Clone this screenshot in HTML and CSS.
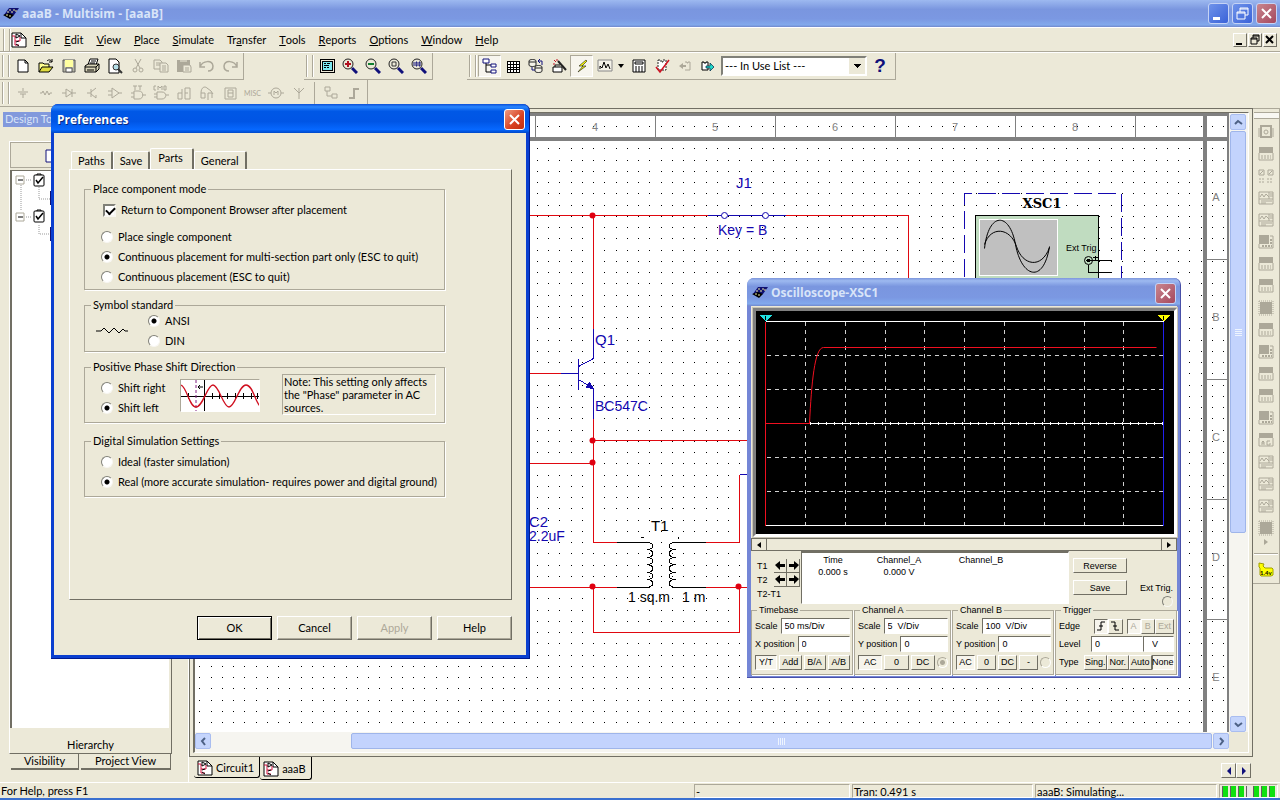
FILE: index.html
```
<!DOCTYPE html>
<html lang="en">
<head>
  <meta charset="UTF-8" />
  <meta name="viewport" content="width=device-width, initial-scale=1.0" />
  <title>aaaB - Multisim - [aaaB]</title>
  <link rel="stylesheet" href="styles.css">
</head>
<body>
  <!-- shared icons -->
  <svg class="sprite" aria-hidden="true">
    <symbol id="i-app" viewBox="0 0 16 16">
      <path d="M6 2h10l-5 7H1z" fill="#101070"/>
      <path d="M0 9l6-2 5 2-4 4z" fill="#000"/>
      <path d="M6 4h2M10 4h2M4 6h2M8 6h2M12 5h2M3 9h2M6 10h2" stroke="#e8e8a0"/>
    </symbol>
    <symbol id="i-doc" viewBox="0 0 16 16">
      <path d="M1 1h9l5 5v9H1z" fill="#fff" stroke="#000"/>
      <path d="M10 1v5h5" fill="none" stroke="#000"/>
      <path d="M1 4h3v9h4M4 9h5V5" fill="none" stroke="#d0103a"/>
      <path d="M5 2l4 2-4 2zM5 10l3-1M5 12l3 2" fill="#fff" stroke="#000"/>
    </symbol>
    <symbol id="i-lens" viewBox="0 0 16 16">
      <path d="M10 10l5 5" stroke="#10107a" stroke-width="3"/>
      <circle cx="6" cy="6" r="5" fill="#ece9d8" stroke="#222"/>
    </symbol>
    <symbol id="i-check" viewBox="0 0 12 14">
      <rect x="1" y="2" width="10" height="11" rx="1" fill="#fff" stroke="#000"/>
      <path d="M4 2V1h4v1" fill="none" stroke="#000"/>
      <path d="M3 7l2 3 5-6" fill="none" stroke="#000" stroke-width="1.5"/>
    </symbol>
    <symbol id="m-a" viewBox="0 0 16 16">
      <path d="M3 2h10v11H3z" fill="none" stroke="#aca899" stroke-width="2"/>
      <path d="M1 4v9M15 4v9" stroke="#aca899"/><circle cx="8" cy="8" r="2" fill="none" stroke="#aca899"/>
    </symbol>
    <symbol id="m-b" viewBox="0 0 16 16">
      <path d="M1 1h14v6H1z" fill="#aca899"/>
      <path d="M1 7v7h14V7" fill="none" stroke="#aca899"/>
      <path d="M3 10h10M3 12h10" stroke="#aca899" stroke-dasharray="2 1"/>
    </symbol>
    <symbol id="m-c" viewBox="0 0 16 16">
      <path d="M1 2h5v5H1zM10 2h5v5h-5zM2 6l3-3M11 6l3-3" fill="none" stroke="#aca899"/>
      <path d="M1 11h6M9 11h6M1 14h6M9 14h6" stroke="#aca899" stroke-dasharray="2 1"/>
    </symbol>
    <symbol id="m-d" viewBox="0 0 16 16">
      <path d="M1 2h14v12H1zM1 9h14M11 2v7" fill="none" stroke="#aca899"/>
      <path d="M2 7l2-3 2 3 2-3 3 3M12 4h3M12 6h3M3 11h11M3 13h5" fill="none" stroke="#aca899"/>
    </symbol>
    <symbol id="m-e" viewBox="0 0 16 16">
      <path d="M1 1h10v9H1z" fill="#aca899"/>
      <path d="M1 10v4h14V2h-3" fill="none" stroke="#aca899"/>
      <path d="M4 12h10M13 5v5" stroke="#aca899" stroke-width="2" stroke-dasharray="2 1"/>
    </symbol>
    <symbol id="m-f" viewBox="0 0 16 16">
      <path d="M2 2h12v12H2z" fill="#aca899"/>
      <path d="M1 1v14M15 1v14M1 15h14M1 1h14" stroke="#aca899" stroke-dasharray="1 1"/>
    </symbol>
    <symbol id="m-g" viewBox="0 0 16 16">
      <path d="M1 1h14v5H1z" fill="#aca899"/>
      <path d="M1 6v8h14V6M4 13v-3l1-1 1 1v3M4 11h2M12 9H9v4h3v-2" fill="none" stroke="#aca899"/>
    </symbol>
  </svg>

  <header class="titlebar">
    <svg class="icon"><use href="#i-app"/></svg>
    <h1>aaaB - Multisim - [aaaB]</h1>
    <button class="cap" aria-label="Minimize"><svg viewBox="0 0 19 19"><path d="M4 13h7v3H4z" fill="#fff"/></svg></button>
    <button class="cap" aria-label="Restore"><svg viewBox="0 0 19 19"><path d="M7 8V4h8v7h-3M4 8h8v7H4zM4 9h8M7 5h8" fill="none" stroke="#fff"/></svg></button>
    <button class="cap close" aria-label="Close"><svg viewBox="0 0 19 19"><path d="M5 5l9 9M14 5l-9 9" stroke="#fff" stroke-width="2"/></svg></button>
  </header>

  <nav class="menubar">
    <span class="grip"></span>
    <svg class="icon"><use href="#i-doc"/></svg>
    <button><u>F</u>ile</button>
    <button><u>E</u>dit</button>
    <button><u>V</u>iew</button>
    <button><u>P</u>lace</button>
    <button><u>S</u>imulate</button>
    <button>Tr<u>a</u>nsfer</button>
    <button><u>T</u>ools</button>
    <button><u>R</u>eports</button>
    <button><u>O</u>ptions</button>
    <button><u>W</u>indow</button>
    <button><u>H</u>elp</button>
    <div class="mdi">
      <button aria-label="Minimize document"><svg viewBox="0 0 12 12"><path d="M2 9h6v2H2z"/></svg></button>
      <button aria-label="Restore document"><svg viewBox="0 0 12 12"><path d="M4 4V1h6v6H8M2 4h6v6H2zM2 5h6M4 2h6" fill="none" stroke="#000"/></svg></button>
      <button aria-label="Close document"><svg viewBox="0 0 12 12"><path d="M2 2l7 7M9 2l-7 7" stroke="#000" stroke-width="2"/></svg></button>
    </div>
  </nav>

  <div class="toolrow">
    <div class="toolbar">
      <span class="grip"></span>
      <button aria-label="New"><svg viewBox="0 0 16 16"><path d="M3 2h7l3 3v9H3z" fill="#fff" stroke="#000"/><path d="M10 2v3h3" fill="none" stroke="#000"/></svg></button>
      <button aria-label="Open"><svg viewBox="0 0 16 16"><path d="M1 14V5h4l1 1h5v3" fill="#ffff90" stroke="#000"/><path d="M1 14l3-5h11l-4 5z" fill="#e0dc40" stroke="#000"/><path d="M9 3c2-2 4-1 5 1M14 1v3h-3" fill="none" stroke="#000"/></svg></button>
      <button aria-label="Save"><svg viewBox="0 0 16 16"><path d="M2 2h12v12H2z" fill="#b5b5a5" stroke="#555"/><path d="M4 2h8v7H4z" fill="#ffffa0"/><path d="M5 10h6v4H5z" fill="#fff" stroke="#555"/></svg></button>
      <button aria-label="Print"><svg viewBox="0 0 16 16"><path d="M4 7l2-6h8l-2 6" fill="#fff" stroke="#000"/><path d="M1 8l3-2h11v5l-3 3H1z" fill="#d8d4b8" stroke="#000"/><path d="M1 9h11v5M12 9l3-3M3 12h7M7 3h5M6 5h5" fill="none" stroke="#000"/></svg></button>
      <button aria-label="Print preview"><svg viewBox="0 0 16 16"><path d="M2 1h7l3 3v11H2z" fill="#fff" stroke="#000"/><circle cx="9" cy="9" r="3" fill="#b5dfe8" stroke="#333"/><path d="M11 11l4 4" stroke="#333" stroke-width="2"/></svg></button>
      <button aria-label="Cut" disabled><svg viewBox="0 0 16 16"><path d="M5 1l5 9M11 1L6 10" fill="none" stroke="#aca899"/><circle cx="5" cy="12" r="2" fill="none" stroke="#aca899"/><circle cx="11" cy="12" r="2" fill="none" stroke="#aca899"/></svg></button>
      <button aria-label="Copy" disabled><svg viewBox="0 0 16 16"><path d="M1 2h6l2 2v7H1zM3 5h4M3 7h4" fill="none" stroke="#aca899"/><path d="M7 5h6l2 2v7H7z" fill="#ece9d8" stroke="#aca899"/><path d="M9 8h4M9 10h4M9 12h4" stroke="#aca899"/></svg></button>
      <button aria-label="Paste" disabled><svg viewBox="0 0 16 16"><path d="M1 2h13v12H1z" fill="#aca899"/><path d="M4 3h7" stroke="#ece9d8"/><path d="M7 7h7l1 2v5H7z" fill="#ece9d8" stroke="#aca899"/><path d="M9 10h4M9 12h4" stroke="#aca899"/></svg></button>
      <button aria-label="Undo" disabled><svg viewBox="0 0 16 16"><path d="M1 4v5h5M1 9c3-7 12-7 13-1 0 3-2 5-5 5" fill="none" stroke="#aca899" stroke-width="1.5"/></svg></button>
      <button aria-label="Redo" disabled><svg viewBox="0 0 16 16"><path d="M15 4v5h-5M15 9c-3-7-12-7-13-1 0 3 2 5 5 5" fill="none" stroke="#aca899" stroke-width="1.5"/></svg></button>
    </div>
    <div class="toolbar view-tools">
      <span class="grip"></span>
      <button aria-label="Full screen"><svg viewBox="0 0 16 16" shape-rendering="crispEdges"><path d="M1 1h14v13H1z" fill="#ece9d8" stroke="#000"/><path d="M3 3h10v9H3z" fill="#7be8f0" stroke="#000"/><path d="M5 5h2M8 5h3M5 7h5M5 9h2M8 9h2" stroke="#000"/></svg></button>
      <button aria-label="Zoom in"><svg viewBox="0 0 16 16"><use href="#i-lens"/><path d="M3 6h6M6 3v6" stroke="#b01020" stroke-width="2"/></svg></button>
      <button aria-label="Zoom out"><svg viewBox="0 0 16 16"><use href="#i-lens"/><path d="M3 6h6" stroke="#108030" stroke-width="2"/></svg></button>
      <button aria-label="Zoom area"><svg viewBox="0 0 16 16"><use href="#i-lens"/><path d="M4 4h4v4H4z" fill="none" stroke="#333"/></svg></button>
      <button aria-label="Zoom fit"><svg viewBox="0 0 16 16"><use href="#i-lens"/><path d="M3 4v4M5 4h1v4H5zM8 4h1v4H8z" fill="none" stroke="#10107a"/></svg></button>
    </div>
    <div class="toolbar main-tools">
      <span class="grip"></span>
      <button class="on" aria-label="Design toolbox"><svg viewBox="0 0 16 16"><path d="M4 5v9h5M4 7h5" fill="none" stroke="#000"/><path d="M1 1h6v4H1zM9 6h5v3H9zM9 12h5v3H9z" fill="#fff" stroke="#10107a"/></svg></button>
      <button aria-label="Spreadsheet view"><svg viewBox="0 0 16 16" shape-rendering="crispEdges"><path d="M2 3h12v11H2z" fill="#fff" stroke="#000"/><path d="M2 6h12M2 9h12M2 11h12M5 3v11M8 3v11M11 3v11" stroke="#000"/></svg></button>
      <button aria-label="Database manager"><svg viewBox="0 0 16 16"><path d="M1 3c0-2 7-2 7 0v4c0 2-7 2-7 0zM7 9c0-2 7-2 7 0v4c0 2-7 2-7 0zM1 4h7M7 10h7" fill="#f4f2e8" stroke="#222"/><path d="M4 9v3h3M10 3h4v4M12 1l-2 2 2 2" fill="none" stroke="#10107a"/></svg></button>
      <button aria-label="Create component"><svg viewBox="0 0 16 16"><path d="M2 9h9v5H2zM4 9V7h5" fill="#fff" stroke="#000"/><path d="M7 3l8 9" stroke="#222" stroke-width="2"/><path d="M3 2l2 2M2 6h2M6 1v2" stroke="#c01020"/></svg></button>
      <button class="on" aria-label="Run simulation"><svg viewBox="0 0 16 16"><path d="M12 2L5 8h4l-5 6 8-6H8l5-5z" fill="#ff0" stroke="#332" stroke-width=".7"/></svg></button>
      <button class="wide" aria-label="Grapher"><svg viewBox="0 0 16 16"><path d="M1 2h14v11H1z" fill="#f4f2e8" stroke="#888"/><path d="M3 11V8l2 2 2-6 2 6 2-4 2 5" fill="none" stroke="#000"/></svg><svg class="drop" viewBox="0 0 6 4"><path d="M0 0h6L3 4z"/></svg></button>
      <button aria-label="Postprocessor"><svg viewBox="0 0 16 16"><path d="M2 2h12v12H2z" fill="#fff" stroke="#000"/><path d="M4 4h8v2H4z" fill="none" stroke="#000"/><path d="M4 9h9M4 11h9M4 13h9" stroke="#000" stroke-dasharray="2 1"/></svg></button>
      <button aria-label="Electrical rules checking"><svg viewBox="0 0 16 16"><path d="M4 2h3v2h2V2h3v10H4z" fill="#fff" stroke="#222" stroke-dasharray="2 1"/><path d="M2 9l4 5 9-12" fill="none" stroke="#d01020" stroke-width="1.5"/></svg></button>
      <button aria-label="Back annotate" disabled><svg viewBox="0 0 16 16"><path d="M2 8l4-3v2h3v2H6v2z" fill="#aca899"/><path d="M8 4h2v1h1V4h2v8H8" fill="none" stroke="#aca899"/></svg></button>
      <button aria-label="Forward annotate"><svg viewBox="0 0 16 16"><path d="M2 4h2v1h2V4h2v8H2z" fill="#fff" stroke="#000"/><path d="M6 8h4V5l4 4-4 4v-3H6z" fill="#20d8c8" stroke="#024" stroke-width=".7"/></svg></button>
      <select class="inuse" aria-label="In use list"><option>--- In Use List ---</option></select>
      <button class="help" aria-label="Help topics">?</button>
    </div>
  </div>

  <div class="toolrow second">
    <div class="toolbar">
      <span class="grip"></span>
      <button disabled aria-label="Source"><svg viewBox="0 0 16 16"><path d="M8 3v3M3 7h10M5 9h6M8 9v4"/></svg></button>
      <button disabled aria-label="Basic"><svg viewBox="0 0 16 16"><path d="M2 8h2l1-2 2 4 2-4 2 4 1-2h2"/></svg></button>
      <button disabled aria-label="Diode"><svg viewBox="0 0 16 16"><path d="M1 8h4M5 4v8l6-4zM11 4v8M11 8h4"/></svg></button>
      <button disabled aria-label="Transistor"><svg viewBox="0 0 16 16"><path d="M3 8h4M7 4v8M7 7l5-4M7 9l5 4v-3"/></svg></button>
      <button disabled aria-label="Analog"><svg viewBox="0 0 16 16"><path d="M5 3v10l7-5zM1 6h4M1 10h4M12 8h3"/></svg></button>
      <button disabled aria-label="TTL"><svg viewBox="0 0 16 16"><path d="M3 1h4M5 1v4M8 1h4M10 1v4M4 6h5c5 0 5 8 0 8H4zM1 8h3M1 12h3M13 10h3"/></svg></button>
      <button disabled aria-label="CMOS"><svg viewBox="0 0 16 16"><path d="M3 1H1v4h2M5 5V1l2 2 2-2v4M11 1h2v4h-2zM4 7h5c5 0 5 7 0 7H4zM1 9h3M1 12h3M13 10h3"/></svg></button>
      <button disabled aria-label="Misc digital"><svg viewBox="0 0 16 16"><path d="M6 4v10H2V8h4M9 14V3h5v11zM9 8h3"/></svg></button>
      <button disabled aria-label="Mixed"><svg viewBox="0 0 16 16"><path d="M2 8c0-6 4-7 6-5M2 8h4v5H2zM9 15V8h4v5M8 3l4 3 2 3"/></svg></button>
      <button disabled aria-label="Indicator"><svg viewBox="0 0 16 16"><path d="M3 3h11v11H3zM6 5h5v7H6zM6 8h5"/></svg></button>
      <button disabled aria-label="Misc" class="misc">MISC</button>
      <button disabled aria-label="Electromechanical"><svg viewBox="0 0 16 16"><circle cx="8" cy="8" r="5"/><path d="M0 8h3M13 8h3M6 10V6l2 2 2-2v4"/></svg></button>
      <button disabled aria-label="RF"><svg viewBox="0 0 16 16"><path d="M3 3l5 5 5-5M8 3v11"/></svg></button>
      <span class="sep"></span>
      <button disabled aria-label="Hierarchical block"><svg viewBox="0 0 16 16"><path d="M2 2h5v4H2zM9 9h5v4H9zM4 6v5h5"/></svg></button>
      <button disabled aria-label="Bus"><svg viewBox="0 0 16 16"><path d="M3 13h5V4h5" stroke-width="2"/></svg></button>
    </div>
  </div>

  <main class="workspace">
    <aside class="design">
      <div class="design-title">Design Toolbox</div>
      <div class="design-box">
        <div class="design-tools"><svg viewBox="0 0 16 16"><path d="M2 2h12v12H2z" fill="#fff" stroke="#10107a"/></svg></div>
        <div class="tree">
          <svg width="42" height="70">
            <path d="M9 14v26M14 9h5M27 16v12h14M14 46h5M27 54v9h14" fill="none" stroke="#999" stroke-dasharray="1 1"/>
            <path d="M4 5h8v8H4zM4 42h8v8H4z" fill="#fff" stroke="#aca899"/>
            <path d="M6 9h5M6 46h5" stroke="#000"/>
            <path d="M38 20h3v14h-3zM38 56h3v14h-3z" fill="#101070"/>
            <use href="#i-check" x="21" y="2" width="12" height="14"/>
            <use href="#i-check" x="21" y="38" width="12" height="14"/>
          </svg>
        </div>
        <button class="hier">Hierarchy</button>
      </div>
      <div class="design-tabs">
        <button class="vis">Visibility</button>
        <button class="proj">Project View</button>
      </div>
    </aside>

    <section class="document">
      <div class="frame">
        <div class="sheet">
          <svg class="schematic">
            <defs>
              <pattern id="dots" x="537" y="441" width="45" height="45" patternUnits="userSpaceOnUse">
                <path d="M0 0h1v1H0zM11 0h1v1h-1zM22 0h1v1h-1zM34 0h1v1h-1zM0 11h1v1H0zM11 11h1v1h-1zM22 11h1v1h-1zM34 11h1v1h-1zM0 22h1v1H0zM11 22h1v1h-1zM22 22h1v1h-1zM34 22h1v1h-1zM0 34h1v1H0zM11 34h1v1h-1zM22 34h1v1h-1zM34 34h1v1h-1z" fill="#000"/>
              </pattern>
            </defs>
            <g transform="translate(-195 -113)" shape-rendering="crispEdges">
              <rect x="195" y="113" width="1034" height="619" fill="url(#dots)"/>
              <!-- page border -->
              <g fill="#808080">
                <rect x="195" y="113" width="1034" height="3"/>
                <rect x="195" y="137" width="1012" height="4"/>
                <rect x="1203" y="116" width="4" height="616"/>
                <rect x="1227" y="113" width="3" height="619"/>
                <rect x="1207" y="137" width="20" height="4"/>
                <rect x="535" y="116" width="1" height="21"/>
                <rect x="655" y="116" width="1" height="21"/>
                <rect x="775" y="116" width="1" height="21"/>
                <rect x="895" y="116" width="1" height="21"/>
                <rect x="1015" y="116" width="1" height="21"/>
                <rect x="1135" y="116" width="1" height="21"/>
                <rect x="1207" y="259" width="20" height="1"/>
                <rect x="1207" y="379" width="20" height="1"/>
                <rect x="1207" y="499" width="20" height="1"/>
                <rect x="1207" y="619" width="20" height="1"/>
              </g>
              <g class="ruler">
                <text x="595" y="131">4</text><text x="715" y="131">5</text><text x="835" y="131">6</text>
                <text x="955" y="131">7</text><text x="1075" y="131">8</text>
                <text x="1216" y="201">A</text><text x="1216" y="321">B</text><text x="1216" y="441">C</text>
                <text x="1216" y="561">D</text><text x="1216" y="681">E</text>
              </g>
              <!-- half pixel shift keeps 1px strokes on the pixel grid -->
              <g transform="translate(.5 .5)">
                <g class="wire">
                  <path d="M500 215h207M785 215h123v70M593 215v113M500 373h60M593 418v124h23M593 440h160M500 463h93"/>
                  <path d="M705 542h34v-68M500 587h116M705 587h50M593 587v45h146v-45"/>
                </g>
                <g class="part">
                  <path d="M707 215h14M727 215h35M768 215h17M593 328v30l-15 8M578 358v31M560 373h18M578 379l15 9v30M739 474h10"/>
                  <path class="solid" d="M593 388l-7-1 3-5z"/>
                </g>
                <g class="contact" shape-rendering="auto">
                  <circle cx="724" cy="215" r="3"/><circle cx="765" cy="215" r="3"/>
                </g>
                <g fill="#e00010" shape-rendering="auto">
                  <circle cx="592" cy="215" r="3"/><circle cx="592" cy="440" r="3"/><circle cx="592" cy="462" r="3"/>
                  <circle cx="592" cy="586" r="3"/><circle cx="738" cy="586" r="3"/>
                </g>
                <!-- transformer -->
                <path d="M616 542h30c9 0 8 7 0 7 9 0 8 8 0 8 9 0 8 7 0 7 9 0 8 8 0 8 9 0 8 7 0 7 9 0 8 8-1 8h-29M705 542h-30c-9 0-8 7 0 7-9 0-8 8 0 8-9 0-8 7 0 7-9 0-8 8 0 8-9 0-8 7 0 7-9 0-8 8 1 8h29" fill="none" stroke="#000"/>
                <!-- oscilloscope symbol -->
                <path d="M964 300V193h157v107" fill="none" stroke="#1408b0" stroke-dasharray="18 6"/>
                <rect x="975" y="215" width="123" height="90" fill="#c0dcc0" stroke="#000"/>
                <rect x="979" y="219" width="78" height="56" fill="#c0c0c0" stroke="#fff"/>
                <g fill="none" stroke="#000" shape-rendering="auto">
                  <path d="M984 248c4-37 25-37 31-4s28 40 34 2"/>
                  <path d="M984 244c6-19 26-17 32 2s25 23 33 1"/>
                  <circle cx="1088" cy="260" r="4"/>
                </g>
                <circle cx="1088" cy="260" r="2"/>
                <path d="M1088 260h23M1088 264v8h23M1092 257h5M1095 255v5" fill="none" stroke="#000"/>
              </g>
              <path d="M641 537h3v1h-3zM678 537h1v2h-1z"/>
              <g class="label">
                <text x="736" y="188" font-size="15">J1</text>
                <text x="718" y="235">Key = B</text>
                <text x="595" y="345" font-size="15">Q1</text>
                <text x="595" y="411">BC547C</text>
                <text x="529" y="527" font-size="15">C2</text>
                <text x="529" y="541">2.2uF</text>
              </g>
              <g class="label dark">
                <text x="651" y="531" font-size="15">T1</text>
                <text x="628" y="602">1 sq.m</text>
                <text x="682" y="602">1 m</text>
              </g>
              <text x="1042" y="208" class="xsc">XSC1</text>
              <text x="1066" y="251" class="ext">Ext Trig</text>
            </g>
          </svg>
          <div class="vscroll">
            <button class="sb" aria-label="Scroll up"><svg viewBox="0 0 9 9"><path d="M1 6l3-3 4 3"/></svg></button>
            <div class="thumb"><i></i><i></i><i></i><i></i></div>
            <button class="sb" aria-label="Scroll down"><svg viewBox="0 0 9 9"><path d="M1 3l3 3 4-3"/></svg></button>
          </div>
          <div class="hscroll">
            <button class="sb" aria-label="Scroll left"><svg viewBox="0 0 9 9"><path d="M6 1L3 4l3 4"/></svg></button>
            <div class="thumb"><i></i><i></i><i></i><i></i></div>
            <button class="sb" aria-label="Scroll right"><svg viewBox="0 0 9 9"><path d="M3 1l3 3-3 4"/></svg></button>
          </div>
        </div>
      </div>
      <div class="doc-tabs">
        <button class="doc-tab"><svg class="icon"><use href="#i-doc"/></svg>Circuit1</button>
        <button class="doc-tab current"><svg class="icon"><use href="#i-doc"/></svg>aaaB</button>
        <div class="doc-nav">
          <button aria-label="Previous tab"><svg viewBox="0 0 6 8"><path d="M5 0v8L1 4z"/></svg></button>
          <button aria-label="Next tab"><svg viewBox="0 0 6 8"><path d="M1 0v8l4-4z"/></svg></button>
        </div>
      </div>
    </section>

    <aside class="instruments">
      <span class="hgrip"></span>
      <button aria-label="Multimeter"><svg><use href="#m-a"/></svg></button>
      <button aria-label="Function generator"><svg><use href="#m-b"/></svg></button>
      <button aria-label="Wattmeter"><svg><use href="#m-c"/></svg></button>
      <button aria-label="Oscilloscope"><svg><use href="#m-d"/></svg></button>
      <button aria-label="Four channel oscilloscope"><svg><use href="#m-d"/></svg></button>
      <button aria-label="Bode plotter"><svg><use href="#m-e"/></svg></button>
      <button aria-label="Frequency counter"><svg><use href="#m-b"/></svg></button>
      <button aria-label="Word generator"><svg><use href="#m-b"/></svg></button>
      <button aria-label="Logic analyzer"><svg><use href="#m-f"/></svg></button>
      <button aria-label="Logic converter"><svg><use href="#m-b"/></svg></button>
      <button aria-label="IV analyzer"><svg><use href="#m-e"/></svg></button>
      <button aria-label="Distortion analyzer"><svg><use href="#m-b"/></svg></button>
      <button aria-label="Spectrum analyzer"><svg><use href="#m-b"/></svg></button>
      <button aria-label="Network analyzer"><svg><use href="#m-e"/></svg></button>
      <button aria-label="Agilent generator"><svg><use href="#m-g"/></svg></button>
      <button aria-label="Agilent multimeter"><svg><use href="#m-d"/></svg></button>
      <button aria-label="Agilent oscilloscope"><svg><use href="#m-d"/></svg></button>
      <button aria-label="Tektronix oscilloscope"><svg><use href="#m-d"/></svg></button>
      <button aria-label="LabVIEW instrument"><svg><use href="#m-f"/></svg></button>
      <svg class="more" viewBox="0 0 4 6"><path d="M0 0v6l4-3z" fill="#aca899"/></svg>
      <span class="hsep"></span>
      <button class="probe" aria-label="Measurement probe"><svg viewBox="0 0 16 16"><path d="M1 1l5 1-1 2 2 2h7l1 1v6l-2 1H3l-1-1V6L1 5z" fill="#ff0" stroke="#a0a000"/><text x="2" y="13">1.4v</text></svg></button>
    </aside>
  </main>

  <footer class="status">
    <span class="msg">For Help, press F1</span>
    <span class="pane p1">-</span>
    <span class="pane p2">Tran: 0.491 s</span>
    <span class="pane p3">aaaB: Simulating...</span>
    <span class="pane leds"><i></i><i></i><i></i><i class="off"></i><i></i><i></i><i></i></span>
  </footer>

  <section class="window prefs" role="dialog" aria-labelledby="prefs-title">
    <header class="wintitle">
      <h2 id="prefs-title">Preferences</h2>
      <button class="cap close" aria-label="Close preferences"><svg viewBox="0 0 19 19"><path d="M5 5l9 9M14 5l-9 9" stroke="#fff" stroke-width="2"/></svg></button>
    </header>
    <form class="prefs-body">
      <div class="tabs">
        <button type="button">Paths</button>
        <button type="button">Save</button>
        <button type="button" class="active">Parts</button>
        <button type="button">General</button>
      </div>
      <div class="tabpage">
        <fieldset class="mode">
          <legend>Place component mode</legend>
          <label class="check"><input type="checkbox" checked>Return to Component Browser after placement</label>
          <label><input type="radio" name="mode">Place single component</label>
          <label><input type="radio" name="mode" checked>Continuous placement for multi-section part only (ESC to quit)</label>
          <label><input type="radio" name="mode">Continuous placement (ESC to quit)</label>
        </fieldset>
        <fieldset class="symbol">
          <legend>Symbol standard</legend>
          <svg width="32" height="8"><path d="M0 4h5l3-3 5 5 5-5 5 5 4-4 2 2h3" fill="none" stroke="#000"/></svg>
          <div>
            <label><input type="radio" name="std" checked>ANSI</label>
            <label><input type="radio" name="std">DIN</label>
          </div>
        </fieldset>
        <fieldset class="phase">
          <legend>Positive Phase Shift Direction</legend>
          <div class="choices">
            <label><input type="radio" name="phase">Shift right</label>
            <label><input type="radio" name="phase" checked>Shift left</label>
          </div>
          <svg class="wave" viewBox="0 0 78 31">
            <path d="M0 16h78M23 0v31M31 13v6M38 13v6M46 13v6M54 13v6M62 13v6M70 13v6M76 13v6M7 13v6" stroke="#000" shape-rendering="crispEdges"/>
            <path d="M15 0v31" stroke="#802080" stroke-dasharray="3 2"/>
            <path d="M22 7h-5l2-2M17 7l2 2" fill="none" stroke="#000"/>
            <path d="M0 5c6 2 8 22 15 22S26 5 32 5s10 22 16 22S58 5 65 5s9 17 14 21" fill="none" stroke="#d01020" stroke-width="1.3"/>
          </svg>
          <p class="note">Note: This setting only affects the "Phase" parameter in AC sources.</p>
        </fieldset>
        <fieldset class="digital">
          <legend>Digital Simulation Settings</legend>
          <label><input type="radio" name="sim">Ideal (faster simulation)</label>
          <label><input type="radio" name="sim" checked>Real (more accurate simulation- requires power and digital ground)</label>
        </fieldset>
      </div>
      <div class="actions">
        <button type="button" class="default">OK</button>
        <button type="button">Cancel</button>
        <button type="button" disabled>Apply</button>
        <button type="button">Help</button>
      </div>
    </form>
  </section>

  <section class="window scope" role="dialog" aria-labelledby="scope-title">
    <header class="wintitle">
      <svg class="icon"><use href="#i-app"/></svg>
      <h2 id="scope-title">Oscilloscope-XSC1</h2>
      <button class="cap close" aria-label="Close oscilloscope"><svg viewBox="0 0 19 19"><path d="M5 5l9 9M14 5l-9 9" stroke="#fff" stroke-width="2"/></svg></button>
    </header>
    <div class="scope-body">
      <svg class="screen" viewBox="756 311 418 223" shape-rendering="crispEdges">
        <g transform="translate(.5 .5)">
          <path d="M805 321v204M845 321v204M885 321v204M924 321v204M964 321v204M1004 321v204M1044 321v204M1084 321v204M1123 321v204M766 355h397M766 389h397M766 457h397M766 491h397" stroke="#d0d0d0" stroke-dasharray="4 4"/>
          <path d="M765 321h398M765 525h398M809 423h354" stroke="#fff"/>
          <path d="M809 423h354" stroke="#fff" stroke-width="3" stroke-dasharray="1 7"/>
          <path d="M1163 321v204" stroke="#2020f0"/>
          <path d="M765 321v204M765 423h44" stroke="#f01020"/>
          <path d="M809 423c2-40 5-76 14-76h333" fill="none" stroke="#f01020" shape-rendering="auto"/>
        </g>
        <path d="M759 315h13l-6 6z" fill="#20e0e0"/><path d="M765 316h1v4h-1z"/>
        <path d="M1157 315h13l-6 6z" fill="#ff0"/><path d="M1163 316h1v4h-1z"/>
      </svg>
      <div class="scope-scroll">
        <button aria-label="Scroll trace left"><svg viewBox="0 0 4 6"><path d="M4 0v6L0 3z"/></svg></button>
        <button aria-label="Scroll trace right"><svg viewBox="0 0 4 6"><path d="M0 0v6l4-3z"/></svg></button>
      </div>
      <div class="readout">
        <div class="cursors">
          <div><span>T1</span><button aria-label="T1 left"><svg viewBox="0 0 11 9"><path d="M0 4l5-4v3h5v3H5v3z"/></svg></button><button aria-label="T1 right"><svg viewBox="0 0 11 9"><path d="M11 4L6 0v3H1v3h5v3z"/></svg></button></div>
          <div><span>T2</span><button aria-label="T2 left"><svg viewBox="0 0 11 9"><path d="M0 4l5-4v3h5v3H5v3z"/></svg></button><button aria-label="T2 right"><svg viewBox="0 0 11 9"><path d="M11 4L6 0v3H1v3h5v3z"/></svg></button></div>
          <div>T2-T1</div>
        </div>
        <div class="values">
          <table>
            <tr><th>Time</th><th>Channel_A</th><th>Channel_B</th></tr>
            <tr><td>0.000 s</td><td>0.000 V</td><td></td></tr>
          </table>
        </div>
        <div class="side">
          <button>Reverse</button>
          <button>Save</button>
        </div>
        <label class="exttrig">Ext Trig.<input type="radio" name="ext"></label>
      </div>
      <div class="channels">
        <fieldset>
          <legend>Timebase</legend>
          <label>Scale<input type="text" value="50 ms/Div"></label>
          <label>X position<input type="text" value="0"></label>
          <div class="keys"><button class="down">Y/T</button><button>Add</button><button>B/A</button><button>A/B</button></div>
        </fieldset>
        <fieldset>
          <legend>Channel A</legend>
          <label>Scale<input type="text" value="5  V/Div"></label>
          <label>Y position<input type="text" value="0"></label>
          <div class="keys"><button class="down">AC</button><button>0</button><button>DC</button><input type="radio" name="cha" checked disabled aria-label="Channel A terminal"></div>
        </fieldset>
        <fieldset>
          <legend>Channel B</legend>
          <label>Scale<input type="text" value="100  V/Div"></label>
          <label>Y position<input type="text" value="0"></label>
          <div class="keys"><button class="down">AC</button><button>0</button><button>DC</button><button>-</button><input type="radio" name="chb" disabled aria-label="Channel B terminal"></div>
        </fieldset>
        <fieldset class="trigger">
          <legend>Trigger</legend>
          <div class="edge"><span>Edge</span>
            <button class="down" aria-label="Rising edge"><svg viewBox="0 0 10 10"><path d="M1 9h4V1h4M3 5h4"/></svg></button><button aria-label="Falling edge"><svg viewBox="0 0 10 10"><path d="M1 1h4v8h4M3 5h4"/></svg></button>
            <button class="down first" disabled>A</button><button disabled>B</button><button class="ext-key" disabled>Ext</button>
          </div>
          <div class="level"><label for="lvl">Level</label><input id="lvl" type="text" value="0"><input class="unit" type="text" value="V" aria-label="Level unit"></div>
          <div class="keys type"><span>Type</span><button>Sing.</button><button>Nor.</button><button>Auto</button><button class="down">None</button></div>
        </fieldset>
      </div>
    </div>
  </section>
</body>
</html>
```

FILE: styles.css
```
:root {
  --face: #ece9d8;
  --shadow: #aca899;
  --dark: #716f64;
  --blue: #1408b0;
}

* {
  box-sizing: border-box;
}

body {
  margin: 0;
  height: 100vh;
  display: flex;
  flex-direction: column;
  overflow: hidden;
  background: var(--face);
  font-family: Lato, "Liberation Sans", sans-serif;
  font-size: 11px;
  line-height: 14px;
  color: #000;
  border-bottom: 2px solid #3a70d0;
}

button, input, select {
  font: inherit;
  color: inherit;
  margin: 0;
  padding: 0;
}

button {
  background: none;
  border: 0;
  display: flex;
  align-items: center;
  justify-content: center;
  white-space: nowrap;
}

h1, h2 {
  margin: 0;
  flex: 1;
  font-family: "Open Sans", "Noto Sans", sans-serif;
  font-size: 12px;
  line-height: 16px;
  font-weight: 700;
}

.sprite {
  position: absolute;
  width: 0;
  height: 0;
}

.icon {
  width: 16px;
  height: 16px;
  flex: none;
}

/* title bars */
.titlebar {
  display: flex;
  align-items: center;
  gap: 2px;
  height: 27px;
  padding: 0 3px;
  background: linear-gradient(#9db9f0, #7a96df 35%, #7b98e2 70%, #82a9ec 92%, #7088cc);
  color: #d8e4f8;
}

.titlebar h1 {
  padding-left: 1px;
}

.cap {
  width: 21px;
  height: 21px;
  flex: none;
  border: 1px solid #c5d3f5;
  border-radius: 3px;
  background: linear-gradient(135deg, #6f93ea, #3a62d8);
}

.cap + .cap {
  margin-left: 1px;
}

.cap svg {
  width: 19px;
  height: 19px;
}

.cap.close {
  background: linear-gradient(135deg, #c9868e, #a5485e);
}

/* menu */
.menubar {
  display: flex;
  align-items: center;
  height: 25px;
  padding: 0 3px;
  border-top: 1px solid #fff;
  border-bottom: 1px solid var(--shadow);
}

.menubar > button {
  margin-right: 13px;
}

.menubar .icon {
  margin: 0 7px 0 1px;
}

.grip {
  width: 7px;
  height: 22px;
  flex: none;
  border: solid var(--shadow);
  border-width: 0 1px;
  box-shadow: inset 1px 0 #fff, 1px 0 #fff;
}

.mdi {
  display: flex;
  gap: 1px;
  margin-left: auto;
}

.mdi button {
  width: 14px;
  height: 14px;
  border: 1px solid;
  border-color: #fff var(--dark) var(--dark) #fff;
}

.mdi svg {
  width: 12px;
  height: 12px;
}

/* toolbars */
.toolrow {
  display: flex;
  height: 28px;
  border-top: 1px solid #fff;
}

.toolbar {
  display: flex;
  align-items: center;
  height: 27px;
  padding: 0 2px;
  border-right: 1px solid var(--shadow);
  border-bottom: 1px solid var(--shadow);
}

.toolbar .grip {
  margin-right: 2px;
}

.toolbar button {
  width: 23px;
  height: 22px;
  flex: none;
}

.toolbar svg {
  width: 16px;
  height: 16px;
}

.view-tools {
  margin-left: 60px;
}

.main-tools {
  margin-left: 34px;
}

.toolbar button.on {
  background: #f7f5ee;
  border: 1px solid;
  border-color: var(--shadow) #fff #fff var(--shadow);
}

.toolbar button.wide {
  width: 34px;
  gap: 5px;
}

.toolbar .drop {
  width: 6px;
  height: 4px;
}

.inuse {
  width: 146px;
  height: 20px;
  margin-left: 2px;
  padding-left: 2px;
  appearance: none;
  border: 2px solid;
  border-color: #808078 #fff #fff #808078;
  border-radius: 0;
  background:
    conic-gradient(from -45deg at 50% 100%, #000 90deg, transparent 0) right 4px center / 8px 4px no-repeat,
    linear-gradient(var(--face), var(--face)) right / 16px 100% no-repeat,
    #fff;
}

.toolbar .help {
  width: 26px;
  color: #10107a;
  font-family: "Liberation Sans", Arial, sans-serif;
  font-size: 19px;
  font-weight: 700;
}

.second {
  border: 0;
}

.second svg {
  fill: none;
  stroke: var(--shadow);
}

.second .misc {
  color: var(--shadow);
  font-size: 7px;
}

.sep {
  width: 1px;
  height: 22px;
  margin: 0 4px;
  background: var(--shadow);
}

/* workspace */
.workspace {
  flex: 1;
  min-height: 0;
  display: flex;
}

.design {
  width: 189px;
  flex: none;
  display: flex;
  flex-direction: column;
  padding: 4px 16px 12px 3px;
  border-right: 1px solid #fff;
}

.design-title {
  height: 15px;
  margin-bottom: 14px;
  padding-left: 2px;
  background: #8299dc;
  color: #d8e4f8;
}

.design-box {
  flex: 1;
  display: flex;
  flex-direction: column;
  margin-left: 6px;
  border: 1px solid;
  border-color: #fff var(--dark) var(--dark) #fff;
}

.design-tools {
  height: 26px;
  margin-bottom: 2px;
  padding: 5px 33px;
  border: 1px solid var(--shadow);
}

.design-tools svg {
  width: 16px;
  height: 16px;
}

.tree {
  flex: 1;
  margin-right: 2px;
  border: solid var(--dark);
  border-width: 1px 0 0 2px;
  background: #fff;
}

.hier {
  height: 25px;
  padding-top: 8px;
}

.design-tabs {
  display: flex;
  gap: 2px;
  margin-left: 8px;
}

.design-tabs button {
  height: 16px;
  border: solid var(--dark);
  border-width: 0 1px 2px 0;
}

.vis {
  width: 68px;
}

.proj {
  width: 90px;
}

.document {
  flex: 1;
  min-width: 0;
  display: flex;
  flex-direction: column;
}

.frame {
  flex: 1;
  min-height: 0;
  padding: 3px;
  border: 1px solid var(--dark);
}

.sheet {
  height: 100%;
  display: grid;
  grid-template-columns: minmax(0, 1fr) 19px;
  grid-template-rows: minmax(0, 1fr) 20px;
  border: solid;
  border-width: 1px 1px 1px 2px;
  border-color: var(--dark) #fff #fff var(--dark);
}

.schematic {
  width: 100%;
  height: 100%;
  background: #fff;
  font-family: "Liberation Sans", Arial, sans-serif;
}

.ruler text {
  font-size: 11px;
  fill: #808080;
  text-anchor: middle;
}

.wire path {
  fill: none;
  stroke: #e00810;
}

.part path {
  fill: none;
  stroke: var(--blue);
}

.part .solid {
  fill: var(--blue);
}

.contact circle {
  fill: #fff;
  stroke: var(--blue);
}

.label {
  font-size: 14px;
  fill: var(--blue);
}

.label.dark {
  fill: #000;
}

.xsc {
  font-family: "DejaVu Serif", serif;
  font-size: 13px;
  font-weight: 700;
  text-anchor: middle;
}

.ext {
  font-size: 9px;
}

.vscroll, .hscroll {
  display: flex;
  background: #f6f5f0;
}

.vscroll {
  flex-direction: column;
  padding: 1px 2px 0 1px;
}

.hscroll {
  padding: 1px 0 3px;
}

.sb {
  width: 16px;
  height: 16px;
  flex: none;
  border: 1px solid #a9bdf0;
  border-radius: 2px;
  background: #c5d5fc;
}

.sb svg {
  width: 9px;
  height: 9px;
  fill: none;
  stroke: #4d6185;
  stroke-width: 2;
}

.thumb {
  display: flex;
  align-items: center;
  justify-content: center;
  gap: 1px;
  border: 1px solid #9fb5ea;
  border-radius: 2px;
  background: #c3d3fd;
}

.vscroll .thumb {
  flex: 0 0 402px;
  flex-direction: column;
  margin-top: 1px;
}

.vscroll .sb:last-child {
  margin-top: auto;
}

.hscroll .thumb {
  flex: 1;
  margin-left: 140px;
  margin-right: 1px;
}

.thumb i {
  width: 7px;
  height: 1px;
  background: #eef4fe;
}

.hscroll .thumb i {
  width: 1px;
  height: 7px;
}

.doc-tabs {
  display: flex;
  height: 25px;
  padding-left: 5px;
}

.doc-tab {
  height: 21px;
  gap: 3px;
  padding: 2px 5px 0 3px;
  border: solid #000;
  border-width: 0 1px 1px 0;
  border-radius: 0 0 3px 3px;
}

.doc-tab.current {
  height: 23px;
}

.doc-nav {
  display: flex;
  margin: 6px 2px 0 auto;
}

.doc-nav button {
  width: 15px;
  height: 15px;
  border: 1px solid;
  border-color: #fff var(--dark) var(--dark) #fff;
}

.doc-nav svg {
  width: 6px;
  height: 8px;
  fill: #10107a;
}

/* instrument bar */
.instruments {
  width: 27px;
  height: 476px;
  flex: none;
  display: flex;
  flex-direction: column;
  align-items: center;
  border: solid var(--shadow);
  border-width: 1px 1px 1px 0;
}

.hgrip {
  width: 25px;
  height: 7px;
  flex: none;
  margin: 3px 0 2px;
  border: solid var(--shadow);
  border-width: 1px 0;
  background: #f8f7f2;
}

.instruments button {
  height: 22px;
  flex: none;
}

.instruments button svg {
  width: 16px;
  height: 16px;
}

.instruments .more {
  width: 4px;
  height: 6px;
  flex: none;
}

.hsep {
  width: 24px;
  height: 2px;
  flex: none;
  margin: 8px 0 4px;
  background: var(--shadow);
  border-bottom: 1px solid #fff;
}

.probe text {
  font-size: 6px;
  font-weight: 700;
}

/* status bar */
.status {
  display: flex;
  align-items: center;
  gap: 2px;
  height: 16px;
  flex: none;
  padding: 0 2px 0 1px;
  border-top: 1px solid #fff;
}

.msg {
  flex: 1;
}

.pane {
  height: 14px;
  padding-left: 1px;
  border: 1px solid;
  border-color: var(--shadow) #fff #fff var(--shadow);
  line-height: 14px;
}

.p1 {
  width: 156px;
}

.p2 {
  width: 181px;
}

.p3 {
  width: 182px;
}

.leds {
  display: flex;
  gap: 2px;
  width: 59px;
  padding: 1px 2px;
}

.leds i {
  width: 6px;
  height: 11px;
  background: #10e010;
  border-left: 1px solid #606060;
}

.leds .off {
  background: #e4e4e4;
}

/* floating windows */
.window {
  position: absolute;
  display: flex;
  flex-direction: column;
  border-radius: 7px 7px 0 0;
}

.wintitle {
  display: flex;
  align-items: center;
  height: 28px;
  flex: none;
  border-radius: 7px 7px 0 0;
}

fieldset {
  min-width: 0;
  margin: 0;
  padding: 0;
  border: 1px solid var(--shadow);
  box-shadow: 1px 1px #fff;
}

input[type="radio"] {
  width: 12px;
  height: 12px;
  flex: none;
  appearance: none;
  border: 1px solid;
  border-color: #808078 #f8f7f2 #f8f7f2 #808078;
  border-radius: 50%;
  background: #fff;
}

input[type="radio"]:checked {
  background: radial-gradient(circle, #000 2px, #fff 3px);
}

input[type="checkbox"] {
  width: 13px;
  height: 13px;
  flex: none;
  appearance: none;
  border: 2px solid;
  border-color: #808078 #f8f7f2 #f8f7f2 #808078;
  background: #fff;
}

input[type="checkbox"]:checked::before {
  content: "";
  display: block;
  width: 7px;
  height: 4px;
  margin: 1px;
  border: solid #000;
  border-width: 0 0 2px 2px;
  rotate: -45deg;
}

.prefs {
  left: 51px;
  top: 104px;
  width: 479px;
  height: 555px;
  background: #0a3fd0;
  border-bottom: 1px solid #001a90;
  border-right: 1px solid #001a90;
}

.prefs .wintitle {
  height: 29px;
  padding: 2px 4px 0 6px;
  background: linear-gradient(#0a4fd8, #2a86ff 10%, #0058e6 25%, #0055e5 60%, #0668ff 88%, #0048c8);
  color: #fff;
}

.prefs h2 {
  text-shadow: 1px 1px #0a2a80;
}

.prefs .close {
  border-color: #fff;
  background: linear-gradient(135deg, #ee9a80, #d84020 60%, #c03010);
}

.prefs-body {
  flex: 1;
  display: flex;
  flex-direction: column;
  margin: 0 3px 3px;
  padding: 16px 14px 15px 15px;
  background: var(--face);
}

.tabs {
  display: flex;
  align-items: flex-end;
  height: 20px;
  padding-left: 2px;
}

.tabs button {
  height: 18px;
  padding: 0 6px;
  border: solid;
  border-width: 1px 2px 0 1px;
  border-color: #fff var(--dark) #fff #fff;
  border-radius: 2px 2px 0 0;
}

.tabs .active {
  height: 22px;
  padding: 0 9px 4px 7px;
  margin-bottom: -1px;
  background: var(--face);
}

.tabpage {
  flex: 1;
  padding: 13px 66px 0 14px;
  border: 1px solid;
  border-color: #fff var(--dark) var(--dark) #fff;
}

.tabpage fieldset {
  padding: 5px 0 2px 16px;
  margin-bottom: 9px;
}

.tabpage legend {
  height: 12px;
  margin-left: -10px;
  padding: 0 2px;
  line-height: 12px;
}

.tabpage label {
  display: flex;
  align-items: center;
  gap: 5px;
  height: 20px;
  white-space: nowrap;
}

.tabpage .check {
  margin: 0 0 7px 2px;
}

.tabpage .symbol {
  display: flex;
  align-items: center;
  gap: 20px;
  padding: 0 0 0 11px;
}

.tabpage .symbol legend {
  margin-left: -5px;
}

.tabpage .phase {
  display: flex;
  align-items: flex-start;
  margin-bottom: 12px;
  padding-bottom: 4px;
}

.choices {
  width: 79px;
}

.wave {
  width: 80px;
  height: 33px;
  margin-top: 1px;
  background: #fff;
  border: 1px solid;
  border-color: var(--shadow) #fff #fff var(--shadow);
}

.note {
  width: 154px;
  margin: -4px 0 0 22px;
  padding: 0 0 0 1px;
  border: 1px solid;
  border-color: var(--shadow) #fff #fff var(--shadow);
  line-height: 13px;
}

.tabpage .digital {
  padding-bottom: 4px;
}

.actions {
  display: flex;
  justify-content: flex-end;
  gap: 5px;
  margin-top: 16px;
}

.actions button {
  width: 75px;
  height: 24px;
  border: 1px solid;
  border-color: #fff var(--dark) var(--dark) #fff;
  box-shadow: inset -1px -1px var(--shadow);
}

.actions .default {
  border-color: #000;
  box-shadow: inset 1px 1px #fff, inset -1px -1px var(--dark);
}

button:disabled {
  color: var(--shadow);
}

/* oscilloscope */
.scope {
  left: 747px;
  top: 278px;
  width: 434px;
  height: 400px;
  background: #7486d6;
  border-bottom: 1px solid #4850a8;
  border-right: 1px solid #4850a8;
  font-family: "Liberation Sans", Arial, sans-serif;
  font-size: 9px;
  line-height: 12px;
}

.scope .wintitle {
  gap: 3px;
  padding: 2px 4px 0 5px;
  background: linear-gradient(#7e96dc, #9db9f0 10%, #7a96df 30%, #7b98e2 70%, #82a9ec 92%, #7088cc);
  color: #d8e4f8;
}

.scope-body {
  flex: 1;
  display: flex;
  flex-direction: column;
  margin: 0 3px 4px 4px;
  background: var(--face);
}

.screen {
  height: 229px;
  flex: none;
  margin: 2px 0 0 2px;
  border: 3px solid;
  border-color: #808080 #fff #fff #808080;
  outline: 1px solid #c8c4b4;
  background: #000;
}

.scope-scroll {
  display: flex;
  justify-content: space-between;
  height: 13px;
  margin-top: 1px;
  border: solid var(--dark);
  border-width: 1px 0;
}

.scope-scroll button {
  width: 16px;
  border: solid var(--dark);
  border-width: 0 1px;
}

.scope-scroll svg {
  width: 4px;
  height: 6px;
}

.readout {
  display: flex;
  height: 53px;
}

.cursors {
  width: 50px;
  padding: 8px 0 0 6px;
}

.cursors div {
  display: flex;
  align-items: center;
  height: 14px;
}

.cursors span {
  width: 17px;
}

.cursors button {
  width: 13px;
  height: 14px;
  border: solid var(--dark);
  border-width: 0 1px 1px 0;
}

.cursors svg {
  width: 11px;
  height: 9px;
}

.values {
  width: 268px;
  padding-top: 1px;
  border: solid;
  border-width: 2px 1px 1px 1px;
  border-color: var(--dark) #fff #fff var(--dark);
  background: #fff;
}

.values table {
  border-collapse: collapse;
}

.values th, .values td {
  height: 12px;
  padding: 0;
  width: 82px;
  text-align: center;
  font-weight: 400;
}

.values tr > :first-child {
  width: 56px;
  padding-left: 6px;
}

.side {
  display: flex;
  flex-direction: column;
  gap: 7px;
  padding: 7px 0 0 4px;
}

.side button {
  width: 54px;
  height: 15px;
  border: 1px solid;
  border-color: #fff var(--dark) var(--dark) #fff;
}

.exttrig {
  display: flex;
  flex-direction: column;
  align-items: flex-end;
  gap: 2px;
  margin: 31px 4px 0 auto;
}

.channels {
  display: grid;
  grid-template-columns: 102px 97px 102px minmax(0, 1fr);
  gap: 1px;
  height: 71px;
}

.channels fieldset {
  padding: 1px 2px 0 3px;
}

.channels legend {
  height: 12px;
  margin-left: 2px;
  padding: 0 2px;
}

.channels label {
  display: flex;
  align-items: center;
  gap: 3px;
  height: 18px;
}

.channels input[type="text"] {
  min-width: 0;
  flex: 1;
  height: 16px;
  padding-left: 3px;
  border: 1px solid;
  border-color: var(--dark) #fff #fff var(--dark);
  border-radius: 0;
  background: #fff;
}

.keys {
  display: flex;
  align-items: center;
  gap: 2px;
  height: 18px;
}

.keys input {
  margin-left: auto;
}

.channels input[type="radio"]:disabled {
  width: 11px;
  height: 11px;
  background: var(--face);
  border-color: var(--shadow) #fff #fff var(--shadow);
}

.channels input[type="radio"]:checked {
  background: radial-gradient(circle, var(--shadow) 2px, var(--face) 3px);
}

.keys button, .edge button {
  min-width: 14px;
  height: 15px;
  flex: 1;
  border: 1px solid;
  border-color: #fff var(--dark) var(--dark) #fff;
}

.keys .down, .edge .down {
  background: #f6f4ec;
  border-color: var(--dark) #fff #fff var(--dark);
}

.exttrig input[type="radio"] {
  width: 11px;
  height: 11px;
  background: var(--face);
}

.edge {
  display: flex;
  align-items: center;
  height: 18px;
}

.edge span {
  width: 35px;
}

.edge .ext-key {
  flex: 0 0 19px;
}

.edge svg {
  width: 10px;
  height: 10px;
  fill: none;
  stroke: #000;
}

.edge .first {
  margin-left: 4px;
}

.level {
  display: flex;
  align-items: center;
}

.level label {
  width: 32px;
}

.channels .level .unit {
  flex: 0 0 31px;
  padding-left: 8px;
}

.type {
  gap: 0;
}

.type span {
  width: 25px;
}
```
